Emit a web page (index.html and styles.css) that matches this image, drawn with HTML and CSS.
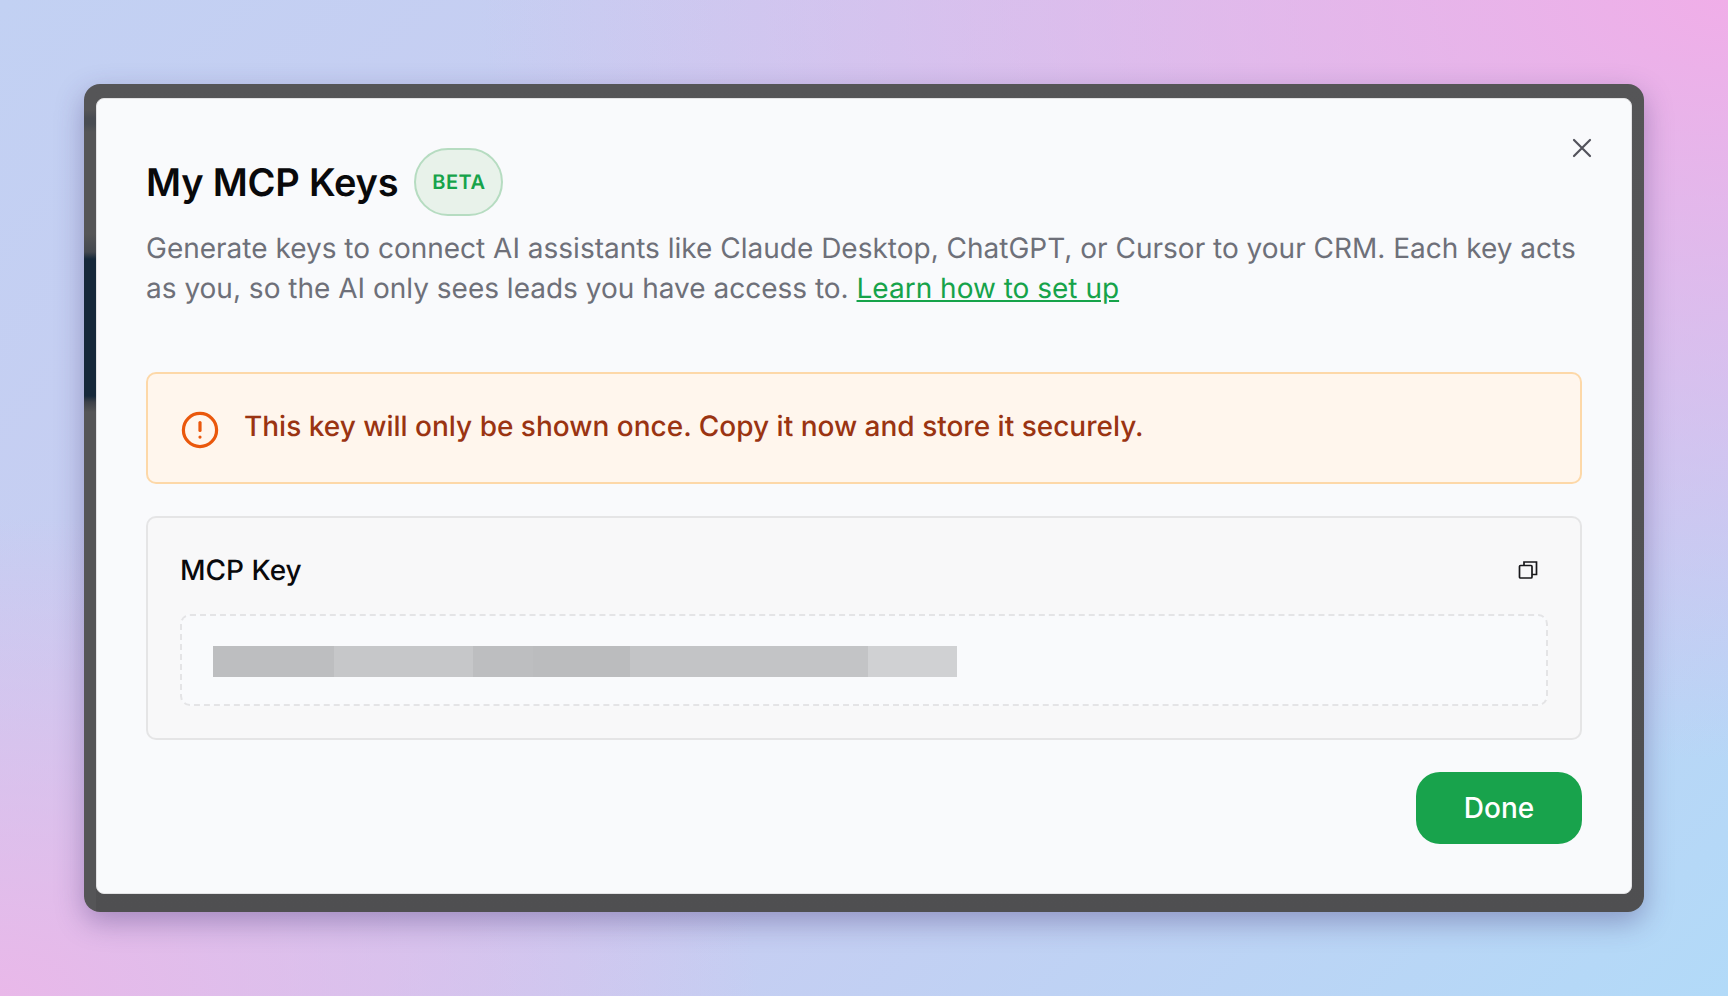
FILE: index.html
```html
<!DOCTYPE html>
<html lang="en">
<head>
  <meta charset="UTF-8">
  <title>My MCP Keys</title>
  <link rel="stylesheet" href="styles.css">
</head>
<body>
  <div class="frame">
    <div class="modal">
      <button type="button" class="close" aria-label="Close">
        <svg width="20" height="20" viewBox="0 0 20 20" fill="none" stroke="#52525b" stroke-width="2.2" stroke-linecap="round"><path d="M2 2 18 18M18 2 2 18"/></svg>
      </button>
      <div class="header">
        <h2>My MCP Keys</h2>
        <span class="badge">BETA</span>
      </div>
      <p class="desc">Generate keys to connect AI assistants like Claude Desktop, ChatGPT, or Cursor to your CRM. Each key acts as you, so the AI only sees leads you have access to. <a href="#">Learn how to set up</a></p>
      <div class="alert">
        <svg class="alert-icon" width="38" height="38" viewBox="0 0 38 38" fill="none" stroke="#ea580c" stroke-width="3.2" stroke-linecap="round"><circle cx="19" cy="19" r="16.6"/><path d="M19 11.5V19.5"/><path d="M19 26v.1"/></svg>
        <span>This key will only be shown once. Copy it now and store it securely.</span>
      </div>
      <div class="key-box">
        <div class="key-head">
          <span class="key-label">MCP Key</span>
          <svg width="20" height="20" viewBox="0 0 20 20" fill="none" stroke="#18181b" stroke-width="1.7"><rect x="1.5" y="5.5" width="12.5" height="12.5" rx="1"/><path d="M6 5.5V2h12.5v12.5H14"/></svg>
        </div>
        <div class="key-value">
          <div class="blur">
            <i class="s1"></i><i class="s2"></i><i class="s3"></i><i class="s4"></i><i class="s5"></i><i class="s6"></i>
          </div>
        </div>
      </div>
      <div class="actions">
        <button type="button" class="done">Done</button>
      </div>
    </div>
  </div>
</body>
</html>
```

FILE: styles.css
```css
html, body {
  height: 100%;
}
body {
  margin: 0;
  padding: 84px;
  box-sizing: border-box;
  overflow: hidden;
  font-family: Inter, "Noto Sans", sans-serif;
  text-rendering: geometricPrecision;
  background:
    radial-gradient(1250px 760px at 100% 0, #f0aee8 0%, rgba(240,174,232,0) 100%),
    radial-gradient(760px 480px at 0 100%, #e9b8e9 0%, rgba(233,184,233,0) 100%),
    linear-gradient(135deg, #c2d1f3 0%, #cbcaf0 50%, #b2daf8 100%);
}
.frame {
  height: 100%;
  box-sizing: border-box;
  padding: 14px 12px 18px;
  border-radius: 16px;
  background:
    linear-gradient(#555557 0, #555557 26px, #494c52 34px, #494c52 40px, #555557 48px, #555557 150px, #44484f 168px, #16283a 175px, #16283a 312px, #3c4048 318px, #555557 328px) left top / 12px 100% no-repeat,
    linear-gradient(#555557, #4f4f51);
  box-shadow: 0 10px 28px rgba(60,45,110,0.36);
}
.modal {
  position: relative;
  height: 100%;
  box-sizing: border-box;
  padding: 49px 49px 0;
  background: #f9fafc;
  border: 1px solid #e2e2e4;
  border-radius: 8px;
}
.close {
  position: absolute;
  top: 39px;
  right: 39px;
  padding: 0;
  width: 20px;
  height: 20px;
  border: none;
  background: none;
}
.header {
  display: flex;
  align-items: center;
  gap: 16px;
  height: 68px;
}
h2 {
  margin: 2px 0 0;
  font-size: 38px;
  font-weight: 600;
  letter-spacing: -0.2px;
  color: #09090b;
}
.badge {
  box-sizing: border-box;
  width: 89px;
  height: 68px;
  display: flex;
  align-items: center;
  justify-content: center;
  font-size: 20px;
  font-weight: 600;
  letter-spacing: 0.5px;
  color: #16a34a;
  background: #e8f2ea;
  border: 2px solid #b6dcc1;
  border-radius: 34px;
}
.desc {
  margin: 12px 0 0;
  font-size: 28px;
  line-height: 40px;
  color: #6e7079;
}
.desc a {
  color: #16a34a;
}
.alert {
  display: flex;
  align-items: flex-start;
  gap: 25px;
  margin-top: 64px;
  padding: 34px 33px 33px;
  background: #fff6ed;
  border: 2px solid #fdd8a8;
  border-radius: 10px;
  font-size: 28px;
  line-height: 36px;
  font-weight: 500;
  color: #9a3412;
}
.alert-icon {
  margin-top: 3px;
}
.key-box {
  margin-top: 32px;
  padding: 30px 32px 32px;
  height: 224px;
  box-sizing: border-box;
  background: #f8f8f9;
  border: 2px solid #e5e5e6;
  border-radius: 10px;
}
.key-head {
  display: flex;
  justify-content: space-between;
  align-items: center;
  height: 44px;
  padding-right: 10px;
}
.key-label {
  font-size: 28px;
  font-weight: 500;
  color: #09090b;
}
.key-value {
  margin-top: 22px;
  height: 92px;
  box-sizing: border-box;
  padding: 30px 31px;
  background: #f9fafc;
  border: 2px dashed #e4e4e6;
  border-radius: 10px;
}
.blur {
  display: flex;
  height: 31px;
}
.blur i {
  display: block;
}
.s1 { width: 121px; background: #bdbec0; }
.s2 { width: 139px; background: #c6c7c9; }
.s3 { width: 60px; background: #bdbec0; }
.s4 { width: 97px; background: #bbbcbe; }
.s5 { width: 238px; background: #c3c4c6; }
.s6 { width: 89px; background: #d0d1d3; }
.actions {
  display: flex;
  justify-content: flex-end;
  margin-top: 32px;
}
.done {
  width: 166px;
  height: 72px;
  border: none;
  border-radius: 24px;
  background: #18a34c;
  color: #fff;
  font-family: inherit;
  font-size: 28px;
  font-weight: 500;
}
```
